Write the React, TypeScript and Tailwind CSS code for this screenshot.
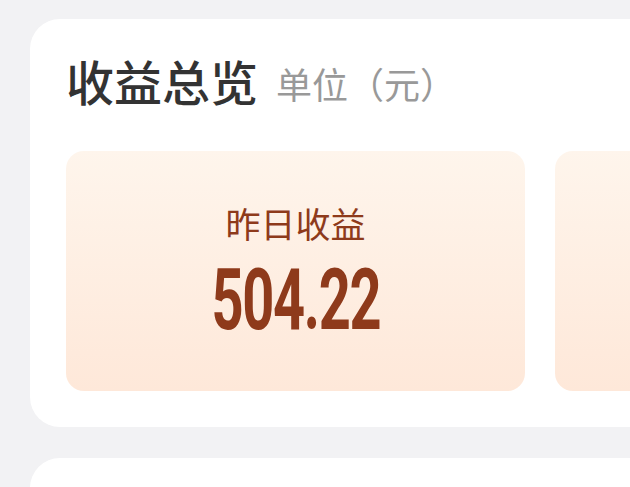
import React from "react";

const cjk = '"Noto Sans CJK SC", "Noto Sans", sans-serif';

function StatCard({ label, value }: { label: string; value: string }) {
  return (
    <div className="w-[459px] h-[240px] shrink-0 rounded-[18px] bg-gradient-to-b from-[#fef5ec] to-[#fee8d9] flex flex-col items-center pt-[54px]">
      <div className="h-[36px] text-[35px] leading-none text-[#8e3a1b]" style={{ fontFamily: cjk }}>
        {label}
      </div>
      <div
        className="mt-[16px] h-[86px] text-[86px] leading-none font-bold text-[#8e3a1b] scale-x-[0.65] tracking-[-2px] origin-center"
        style={{ fontFamily: 'Roboto, "Liberation Sans", sans-serif' }}
      >
        {value}
      </div>
    </div>
  );
}

export default function App() {
  return (
    <div className="w-[630px] h-[487px] overflow-hidden bg-[#f2f2f4] pl-[30px] pt-[19px] flex flex-col gap-[31px]">
      <div className="w-[700px] shrink-0 rounded-[30px] bg-white pl-[36px] pt-[37px] pb-[36px]">
        <div className="h-[48px] flex items-end" style={{ fontFamily: cjk }}>
          <span className="text-[48px] leading-none font-medium text-[#333333]">收益总览</span>
          <span className="ml-[18px] text-[36px] leading-none text-[#999999] mb-[3px]">单位（元）</span>
        </div>
        <div className="mt-[47px] flex gap-[30px]">
          <StatCard label="昨日收益" value="504.22" />
          <StatCard label="" value="" />
        </div>
      </div>
      <div className="w-[700px] h-[200px] shrink-0 rounded-[30px] bg-white" />
    </div>
  );
}
